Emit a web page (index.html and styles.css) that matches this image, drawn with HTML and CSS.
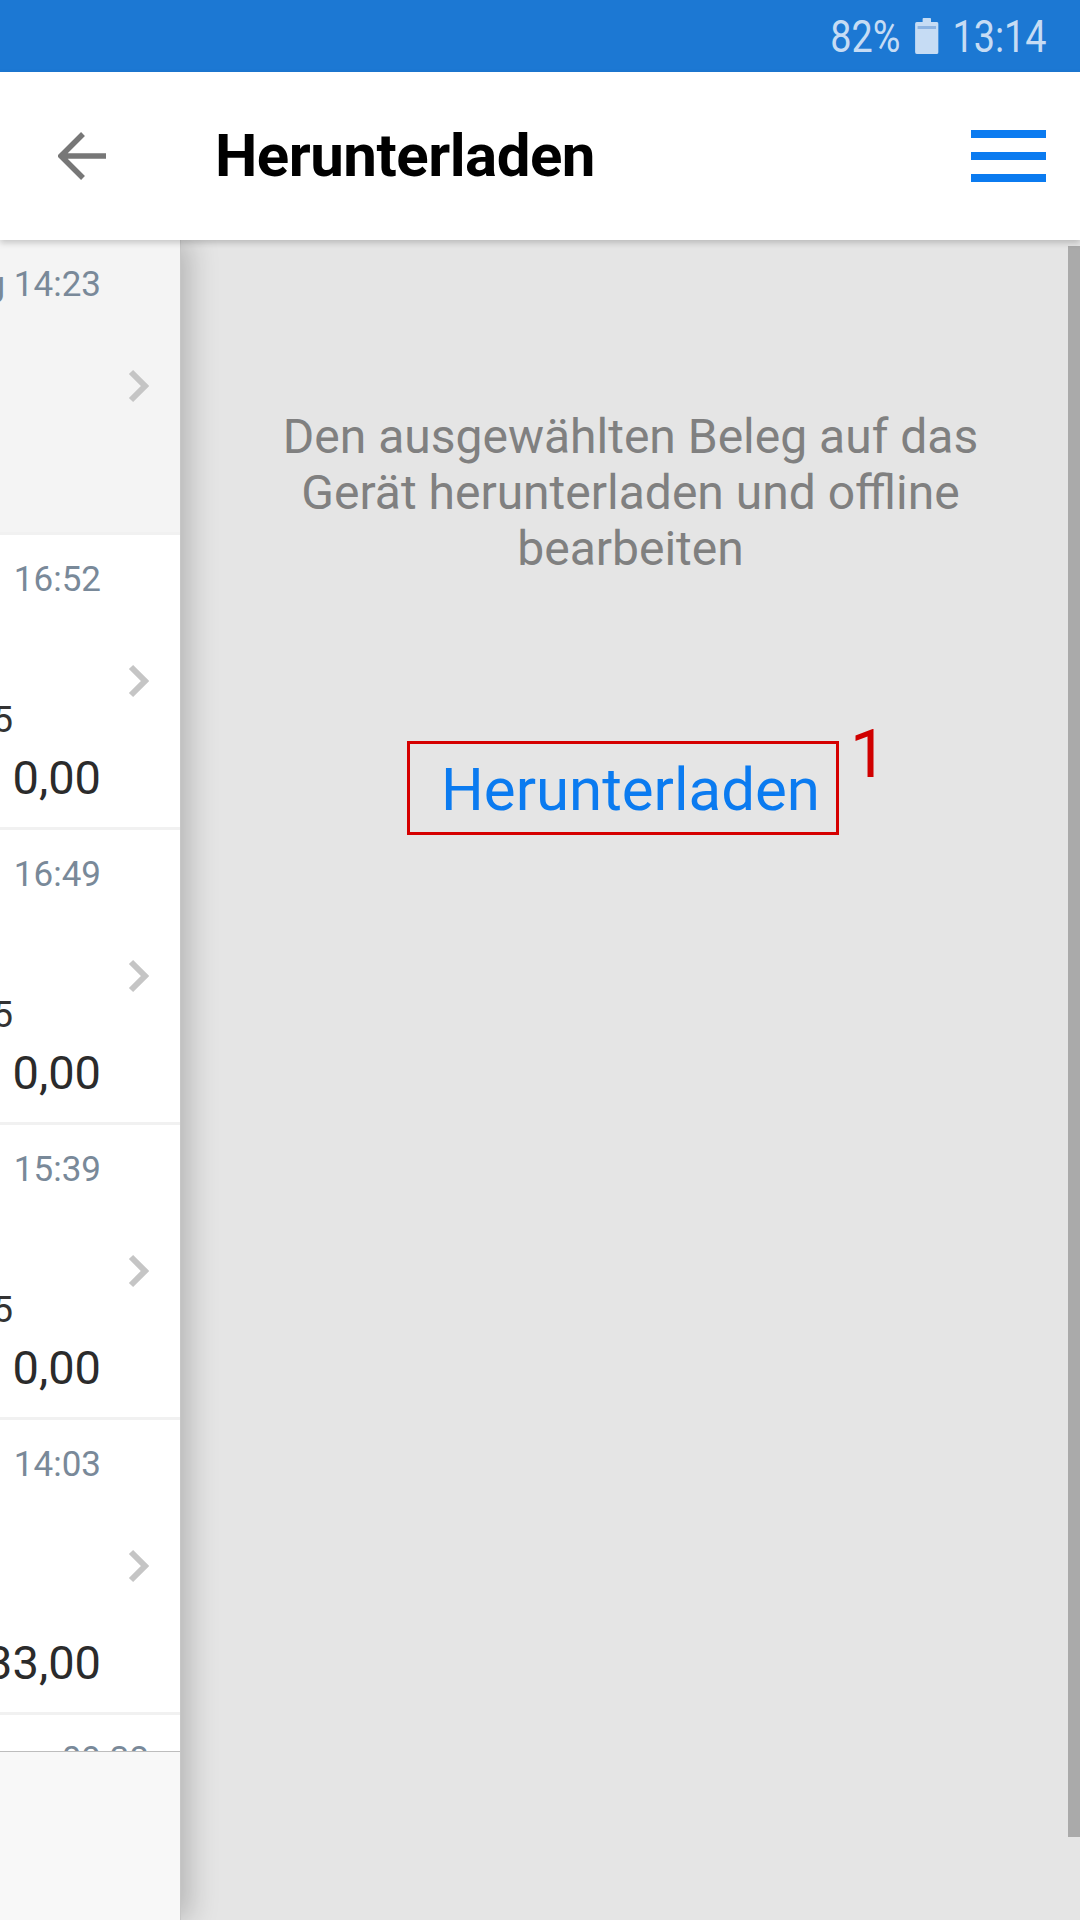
FILE: index.html
```html
<!DOCTYPE html>
<html lang="de">
<head>
  <meta charset="UTF-8" />
  <meta name="viewport" content="width=device-width, initial-scale=1.0"/>
  <title>Herunterladen</title>
  <link rel="stylesheet" href="styles.css">
</head>
<body>
  <div class="screen">
    <div class="status-bar">
      <div class="status-items">
        <span>82%</span>
        <svg class="battery" width="28" height="36" viewBox="0 0 28 36">
          <rect x="9" y="0" width="10" height="5" rx="1" fill="#c6dcf4"/>
          <rect x="0" y="4" width="28" height="32" rx="2" fill="#c6dcf4"/>
          <rect x="3" y="8" width="22" height="3" fill="#8db4e2"/>
        </svg>
        <span>13:14</span>
      </div>
    </div>

    <header class="app-bar">
      <button class="back-btn" aria-label="Zurück">
        <svg width="48" height="48" viewBox="0 0 48 48">
          <path d="M48 24 H3 M25 2 L3 24 L25 46" fill="none" stroke="#777" stroke-width="5.5"/>
        </svg>
      </button>
      <h1 class="title">Herunterladen</h1>
      <button class="menu-btn" aria-label="Menü"><span></span><span></span><span></span></button>
    </header>

    <main class="main">
      <aside class="list-panel">
        <ul class="doc-list">
          <li class="doc-row selected">
            <div class="doc-info">
              <span class="doc-time">Montag 14:23</span>
            </div>
            <svg class="chevron" viewBox="0 0 21 34"><polyline points="3,3 17,17 3,31" fill="none" stroke="#c5c5c5" stroke-width="6"/></svg>
          </li>
          <li class="doc-row">
            <div class="doc-info">
              <span class="doc-time">16:52</span>
              <span class="doc-ref">Rechnung 2015</span>
              <span class="doc-amount">0,00</span>
            </div>
            <svg class="chevron" viewBox="0 0 21 34"><polyline points="3,3 17,17 3,31" fill="none" stroke="#c5c5c5" stroke-width="6"/></svg>
          </li>
          <li class="doc-row">
            <div class="doc-info">
              <span class="doc-time">16:49</span>
              <span class="doc-ref">Rechnung 2015</span>
              <span class="doc-amount">0,00</span>
            </div>
            <svg class="chevron" viewBox="0 0 21 34"><polyline points="3,3 17,17 3,31" fill="none" stroke="#c5c5c5" stroke-width="6"/></svg>
          </li>
          <li class="doc-row">
            <div class="doc-info">
              <span class="doc-time">15:39</span>
              <span class="doc-ref">Rechnung 2015</span>
              <span class="doc-amount">0,00</span>
            </div>
            <svg class="chevron" viewBox="0 0 21 34"><polyline points="3,3 17,17 3,31" fill="none" stroke="#c5c5c5" stroke-width="6"/></svg>
          </li>
          <li class="doc-row">
            <div class="doc-info">
              <span class="doc-time">14:03</span>
              <span class="doc-ref far">Angebot</span>
              <span class="doc-amount">1.233,00</span>
            </div>
            <svg class="chevron" viewBox="0 0 21 34"><polyline points="3,3 17,17 3,31" fill="none" stroke="#c5c5c5" stroke-width="6"/></svg>
          </li>
          <li class="doc-row">
            <div class="doc-info">
              <span class="doc-time">09:38</span>
            </div>
          </li>
        </ul>
        <div class="list-footer"></div>
      </aside>

      <section class="detail">
        <p class="detail-text">Den ausgewählten Beleg auf das Gerät herunterladen und offline bearbeiten</p>
        <a class="download-link" href="#">Herunterladen<span class="highlight"></span><span class="marker">1</span></a>
        <div class="scrollbar"></div>
      </section>
    </main>
  </div>
</body>
</html>
```

FILE: styles.css
```css
* { box-sizing: border-box; margin: 0; padding: 0; }
body {
  width: 1080px;
  height: 1920px;
  overflow: hidden;
  font-family: Roboto, "Noto Sans", sans-serif;
  background: #e5e5e5;
}
.screen {
  display: flex;
  flex-direction: column;
  height: 1920px;
}

/* status bar */
.status-bar {
  height: 72px;
  background: #1c78d3;
  color: #c6dcf4;
  display: flex;
  justify-content: flex-end;
  align-items: center;
  padding-right: 33px;
}
.status-items {
  display: flex;
  align-items: center;
  gap: 17px;
  font-size: 45px;
  line-height: 1;
  transform: scaleX(0.84);
  transform-origin: right center;
}

/* app bar */
.app-bar {
  height: 168px;
  background: #fff;
  display: flex;
  align-items: center;
  padding: 0 34px 0 58px;
  box-shadow: 0 3px 6px rgba(0,0,0,0.18);
  position: relative;
  z-index: 3;
}
.back-btn {
  background: none;
  border: none;
  width: 48px;
  height: 48px;
  display: flex;
}
.title {
  margin-left: 109px;
  font-size: 60px;
  font-weight: 700;
  line-height: 1;
  color: #000;
  letter-spacing: -0.5px;
}
.menu-btn {
  margin-left: auto;
  width: 75px;
  display: flex;
  flex-direction: column;
  gap: 14px;
  background: none;
  border: none;
}
.menu-btn span {
  display: block;
  height: 8px;
  background: #0b7bf0;
}

/* content */
.main {
  flex: 1;
  display: flex;
  min-height: 0;
}
.list-panel {
  width: 181px;
  flex-shrink: 0;
  display: flex;
  flex-direction: column;
  background: #fff;
  border-right: 1px solid #c6c6c6;
  box-shadow: 8px 0 28px rgba(0,0,0,0.22);
  position: relative;
  z-index: 2;
}
.doc-list {
  list-style: none;
  flex: 1;
  overflow: hidden;
}
.doc-row {
  height: 295px;
  border-bottom: 3px solid #f1f1f1;
  display: flex;
  align-items: center;
  gap: 27px;
  padding-right: 31px;
}
.doc-row.selected { background: #f4f4f4; }
.doc-info {
  flex: 1;
  min-width: 0;
  align-self: stretch;
  display: flex;
  flex-direction: column;
  align-items: flex-end;
  padding-top: 25px;
  white-space: nowrap;
}
.doc-time {
  font-size: 35px;
  line-height: 40px;
  color: #798999;
}
.doc-ref {
  margin-top: 100px;
  margin-right: 88px;
  font-size: 36px;
  line-height: 40px;
  color: #333;
}
.doc-ref.far { margin-right: 260px; }
.doc-amount {
  margin-top: 11px;
  font-size: 47px;
  line-height: 54px;
  color: #2b2b2b;
}
.chevron {
  width: 21px;
  height: 34px;
  flex-shrink: 0;
}
.list-footer {
  height: 169px;
  border-top: 1px solid #bdbdbd;
  background: #f8f8f8;
}

.detail {
  flex: 1;
  position: relative;
  display: flex;
  flex-direction: column;
  align-items: center;
  padding: 169px 90px 0;
}
.detail-text {
  font-size: 48px;
  line-height: 56px;
  color: #808080;
  text-align: center;
}
.download-link {
  margin-top: 178px;
  position: relative;
  font-size: 60px;
  line-height: 70px;
  color: #0b7bf0;
  text-decoration: none;
}
.highlight {
  position: absolute;
  top: -14px;
  bottom: -10px;
  left: -34px;
  right: -19px;
  border: 3px solid #d50000;
}
.marker {
  position: absolute;
  left: calc(100% + 30px);
  top: -33px;
  font-size: 66px;
  line-height: 1;
  color: #d00000;
}
.scrollbar {
  position: absolute;
  top: 6px;
  right: 0;
  width: 12px;
  height: 1591px;
  background: #aaa;
}
```
